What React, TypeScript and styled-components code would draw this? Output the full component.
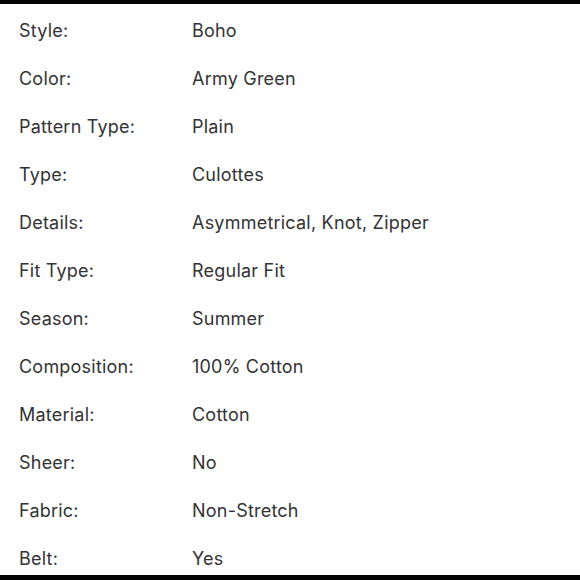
import React from 'react';
import styled, { createGlobalStyle } from 'styled-components';

const GlobalStyle = createGlobalStyle`
  html, body {
    margin: 0;
    padding: 0;
    background: #ffffff;
  }
  body {
    font-family: Inter, 'Noto Sans', 'Liberation Sans', sans-serif;
  }
`;

const Frame = styled.div`
  width: 580px;
  height: 580px;
  display: flex;
  flex-direction: column;
  background: #ffffff;
  overflow: hidden;
`;

const EdgeBar = styled.div<{ $h: number }>`
  height: ${(p) => p.$h}px;
  flex-shrink: 0;
  background: #050505;
`;

const SpecList = styled.dl`
  flex: 1;
  margin: 0;
  padding: 2px 0 0;
  overflow: hidden;
`;

const SpecRow = styled.div`
  height: 48px;
  display: grid;
  grid-template-columns: 173px 1fr;
  align-items: center;
  padding-left: 19px;
  font-size: 18px;
  color: #333333;
  letter-spacing: 0.22px;
`;

const Label = styled.dt`
  margin: 0;
`;

const Value = styled.dd`
  margin: 0;
`;

const specs: [string, string][] = [
  ['Style:', 'Boho'],
  ['Color:', 'Army Green'],
  ['Pattern Type:', 'Plain'],
  ['Type:', 'Culottes'],
  ['Details:', 'Asymmetrical, Knot, Zipper'],
  ['Fit Type:', 'Regular Fit'],
  ['Season:', 'Summer'],
  ['Composition:', '100% Cotton'],
  ['Material:', 'Cotton'],
  ['Sheer:', 'No'],
  ['Fabric:', 'Non-Stretch'],
  ['Belt:', 'Yes'],
];

function App() {
  return (
    <>
      <GlobalStyle />
      <Frame>
        <EdgeBar $h={4} />
        <SpecList>
          {specs.map(([label, value]) => (
            <SpecRow key={label}>
              <Label>{label}</Label>
              <Value>{value}</Value>
            </SpecRow>
          ))}
        </SpecList>
        <EdgeBar $h={5} />
      </Frame>
    </>
  );
}

export default App;
